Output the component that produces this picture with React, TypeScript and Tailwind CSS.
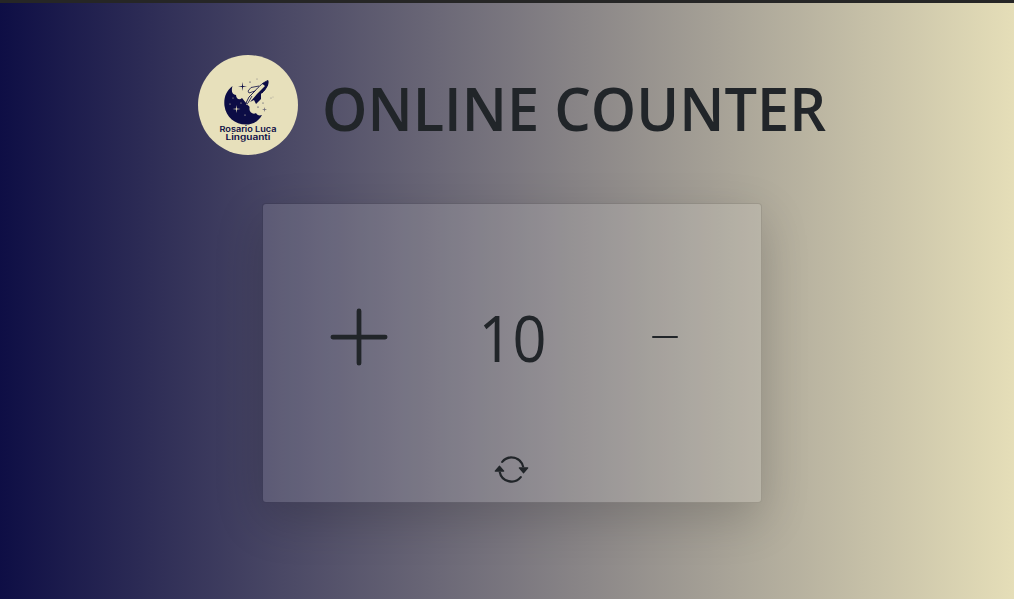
import { useState } from "react";

function Logo() {
  return (
    <div className="flex h-[100px] w-[100px] shrink-0 flex-col items-center rounded-full bg-[#e7e0bb]">
      <svg width="100" height="100" viewBox="0 0 100 100" fill="#0c0c45">
        <path d="M34.500 31C28 36 25.500 43 26.500 51C28 62 37 69.500 48 69.500C55 69.500 61 66 64 60C61 61 59 60 58 58C55 60 51 57 51.500 53C52 50 49 51 48 48L44 43C41 46 38 43 38 40C34 40 33 36 34.500 31Z" />
        <path d="M48 49C49 46 50 43 53 40C57 35 63 28 70 26C72 32 66 39 60 44C57 46 53 48 49 50Z" fill="#e7e0bb" />
        <path d="M50 49L48 48L51 42L57 36C61 31 66 27 70 25.500C71 29 68 34 64 38" fill="none" stroke="#0c0c45" strokeWidth="0.9" />
        <path d="M57 36L51 38L50 36L53 32.500L61 31M54 41L50 48" fill="none" stroke="#0c0c45" strokeWidth="0.8" />
        <path d="M64 28.500L70 25.500L70 30L67 35L63 39L63 44L58 49L56 45L52 47L59 39L67 31Z" />
        <path d="M44.500 27L45 31L49 31.500L45 32L44.500 36L44 32L40 31.500L44 31Z" />
        <path d="M38.500 50L39 53.500L42.500 54L39 54.500L38.500 58L38 54.500L34.500 54L38 53.500Z" fill="#e7e0bb" />
        <path d="M66.500 52L67 54L69 54.500L67 55L66.500 57L66 55L64 54.500L66 54Z" opacity=".55" />
        <g fill="#e7e0bb">
          <circle cx="32" cy="49" r=".6" />
          <circle cx="43" cy="48" r=".6" />
          <circle cx="35" cy="43" r=".5" />
          <circle cx="47" cy="60" r=".6" />
        </g>
        <g>
          <circle cx="52" cy="27" r=".6" />
          <circle cx="59" cy="24" r=".4" />
          <circle cx="60" cy="52" r=".6" />
          <circle cx="65" cy="48" r=".5" />
          <circle cx="73" cy="43" r=".5" opacity=".5" />
          <circle cx="75" cy="42" r=".4" opacity=".5" />
        </g>
        <g fontFamily="Inter, sans-serif" fontSize="7.6" fontWeight="600" textAnchor="middle">
          <text x="50" y="77" textLength="57" lengthAdjust="spacingAndGlyphs">Rosario Luca</text>
          <text x="50" y="85" textLength="45" lengthAdjust="spacingAndGlyphs">Linguanti</text>
        </g>
      </svg>
    </div>
  );
}

export default function App() {
  const [count, setCount] = useState(10);
  return (
    <div className="flex h-[599px] w-full flex-col items-center overflow-hidden border-t-[3px] border-[#262626] bg-linear-to-r/srgb from-[#0e0e45] to-[#e5deb8] font-['Open_Sans',sans-serif] text-[#212529]">
      <header className="mt-[52px] flex h-[100px] w-[618px] items-center">
        <Logo />
        <h1 className="ml-[24px] origin-left scale-x-[0.979] pt-[5px] text-[59px] leading-[72px] font-semibold whitespace-nowrap">
          ONLINE COUNTER
        </h1>
      </header>
      <main className="mt-12 ml-[10px] flex h-[300px] w-[500px] flex-col rounded border border-black/10 bg-white/12 bg-clip-padding shadow-[0_16px_48px_rgba(0,0,0,0.175)]">
        <div className="mt-[85px] grid h-[96px] grid-cols-[192px_114px_192px] items-center">
          <button aria-label="Increase" className="flex justify-center" onClick={() => setCount(count + 1)}>
            <svg width="76" height="76" viewBox="0 0 16 16" fill="currentColor">
              <path d="M8 2a.5.5 0 0 1 .5.5v5h5a.5.5 0 0 1 0 1h-5v5a.5.5 0 0 1-1 0v-5h-5a.5.5 0 0 1 0-1h5v-5A.5.5 0 0 1 8 2" />
            </svg>
          </button>
          <span className="scale-x-[0.93] pt-[1px] pl-px text-center text-[64px] leading-[93px]">{count}</span>
          <button aria-label="Decrease" className="flex justify-center" onClick={() => setCount(count - 1)}>
            <span className="block h-[2px] w-[26px] rounded-full bg-[#212529]" />
          </button>
        </div>
        <button aria-label="Reset" className="mt-[67px] flex justify-center pr-px" onClick={() => setCount(0)}>
          <svg width="35" height="35" viewBox="0 0 16 16" fill="currentColor">
            <path d="M11.534 7h3.932a.25.25 0 0 1 .192.410l-1.966 2.360a.25.25 0 0 1-.384 0l-1.966-2.360a.25.25 0 0 1 .192-.410m-11 2h3.932a.25.25 0 0 0 .192-.410L2.692 6.230a.25.25 0 0 0-.384 0L.342 8.590A.25.25 0 0 0 .534 9" />
            <path fillRule="evenodd" d="M8 3c-1.552 0-2.940.707-3.857 1.818a.5.5 0 1 1-.771-.636A6.002 6.002 0 0 1 13.917 7H12.900A5 5 0 0 0 8 3M3.100 9a5.002 5.002 0 0 0 8.757 2.182.5.5 0 1 1 .771.636A6.002 6.002 0 0 1 2.083 9z" />
          </svg>
        </button>
      </main>
    </div>
  );
}
